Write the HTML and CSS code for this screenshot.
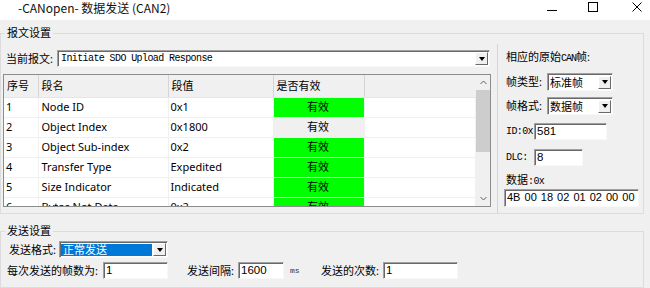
FILE: index.html
```html
<!DOCTYPE html>
<html lang="zh-CN">
<head>
  <meta charset="UTF-8" />
  <title>-CANopen- 数据发送 (CAN2)</title>
  <link rel="stylesheet" href="styles.css">
</head>
<body>
  <div class="titlebar">
    <span class="title">-CANopen- 数据发送 (CAN2)</span>
    <div class="controls">
      <span class="ctl ctl-min"><svg width="10" height="10" viewBox="0 0 10 10"><path d="M0 8.5H10" stroke="#000" stroke-width="1"/></svg></span>
      <span class="ctl ctl-max"><svg width="10" height="10" viewBox="0 0 10 10"><rect x="0.5" y="0.5" width="9" height="9" fill="none" stroke="#000"/></svg></span>
      <span class="ctl ctl-close"><svg width="10" height="10" viewBox="0 0 10 10"><path d="M0.5 0.5L9.5 9.5M9.5 0.5L0.5 9.5" stroke="#000"/></svg></span>
    </div>
  </div>

  <fieldset class="group group-msg">
    <legend>报文设置</legend>
    <div class="msg-body">
      <div class="msg-left">
        <div class="row-current">
          <label class="lbl-current">当前报文:</label>
          <div class="combo combo-msg">
            <span class="combo-text mono">Initiate SDO Upload Response</span>
            <span class="drop"></span>
          </div>
        </div>

        <div class="list">
          <div class="list-view">
            <table class="grid">
              <colgroup>
                <col style="width:34px">
                <col style="width:130px">
                <col style="width:105px">
                <col style="width:91px">
                <col>
              </colgroup>
              <thead>
                <tr>
                  <th>序号</th>
                  <th>段名</th>
                  <th>段值</th>
                  <th>是否有效</th>
                  <th class="blank"></th>
                </tr>
              </thead>
              <tbody>
                <tr><td>1</td><td>Node ID</td><td>0x1</td><td class="valid on">有效</td><td></td></tr>
                <tr><td>2</td><td>Object Index</td><td>0x1800</td><td class="valid off">有效</td><td></td></tr>
                <tr><td>3</td><td>Object Sub-index</td><td>0x2</td><td class="valid on">有效</td><td></td></tr>
                <tr><td>4</td><td>Transfer Type</td><td>Expedited</td><td class="valid on">有效</td><td></td></tr>
                <tr><td>5</td><td>Size Indicator</td><td>Indicated</td><td class="valid on">有效</td><td></td></tr>
                <tr><td>6</td><td>Bytes Not Data</td><td>0x2</td><td class="valid on">有效</td><td></td></tr>
              </tbody>
            </table>
          </div>
          <div class="vscroll">
            <span class="sb-btn"><svg width="7" height="5" viewBox="0 0 7 5"><path d="M0.5 4L3.5 1L6.5 4" fill="none" stroke="#606060"/></svg></span>
            <span class="sb-thumb"></span>
            <span class="sb-track"></span>
            <span class="sb-btn"><svg width="7" height="5" viewBox="0 0 7 5"><path d="M0.5 1L3.5 4L6.5 1" fill="none" stroke="#606060"/></svg></span>
          </div>
        </div>
      </div>

      <div class="msg-right">
        <div class="raw-title">相应的原始<span class="mono">CAN</span>帧:</div>
        <div class="rrow rrow-first">
          <label class="lbl-frame">帧类型:</label>
          <div class="combo combo-frame"><span class="combo-text">标准帧</span><span class="drop"></span></div>
        </div>
        <div class="rrow rrow-gap6">
          <label class="lbl-frame">帧格式:</label>
          <div class="combo combo-frame"><span class="combo-text">数据帧</span><span class="drop"></span></div>
        </div>
        <div class="rrow rrow-id">
          <label class="lbl-id mono">ID:0x</label>
          <div class="field field-id">581</div>
        </div>
        <div class="rrow rrow-dlc">
          <label class="lbl-id mono">DLC:</label>
          <div class="field field-dlc">8</div>
        </div>
        <div class="data-label">数据<span class="mono">:0x</span></div>
        <div class="field field-data">4B 00 18 02 01 02 00 00</div>
      </div>
    </div>
  </fieldset>

  <fieldset class="group group-send">
    <legend>发送设置</legend>
    <div class="send-row send-row-1">
      <label class="lbl-mode">发送格式:</label>
      <div class="combo combo-mode"><span class="combo-text selected">正常发送</span><span class="drop"></span></div>
    </div>
    <div class="send-row send-row-2">
      <label class="lbl-count">每次发送的帧数为:</label>
      <div class="field field-count">1</div>
      <label class="lbl-interval">发送间隔:</label>
      <div class="field field-interval">1600</div>
      <span class="unit mono">ms</span>
      <label class="lbl-times">发送的次数:</label>
      <div class="field field-times">1</div>
    </div>
  </fieldset>
</body>
</html>
```

FILE: styles.css
```css
* {
  box-sizing: border-box;
}
body {
  margin: 0;
  width: 650px;
  height: 288px;
  overflow: hidden;
  background: #f0f0f0;
  color: #000;
  font-family: "Noto Sans", "Noto Sans CJK SC", sans-serif;
  font-size: 11px;
  line-height: 14px;
}
.mono {
  font-family: "Liberation Mono", monospace;
  font-size: 10px;
  letter-spacing: -0.6px;
}

/* title bar */
.titlebar {
  display: flex;
  height: 20px;
  background: #fff;
  overflow: hidden;
}
.title {
  padding-left: 18px;
  font-family: "Noto Sans CJK SC", sans-serif;
  font-size: 12px;
  line-height: 15px;
  color: #111;
}
.controls {
  display: flex;
  margin-left: auto;
  margin-right: -10px;
}
.ctl {
  display: flex;
  justify-content: center;
  align-items: center;
  height: 13px;
}
.ctl-min { width: 40px; }
.ctl-max { width: 42px; }
.ctl-close { width: 46px; }

/* group boxes */
.group {
  margin: 6px 6px 0 0;
  padding: 4px 0 0 2px;
  border: 1px solid #dcdcdc;
  min-inline-size: 0;
}
.group legend {
  margin-left: 2px;
  padding: 0 2px;
  line-height: 14px;
}
.group-send {
  margin-top: 10px;
  padding-top: 3px;
  height: 64px;
}

.msg-body {
  display: flex;
}
.msg-left {
  width: 488px;
  padding: 6px 0 6px 0;
}
.msg-right {
  flex: 1;
  margin-left: 6px;
  border-left: 1px solid #d4d4d4;
  padding-left: 8px;
}

/* combo boxes and edit fields */
.combo, .field {
  height: 17px;
  background: #fff;
  border: 1px solid;
  border-color: #a0a0a0 #f8f8f8 #f8f8f8 #a0a0a0;
  box-shadow: inset 1px 1px 0 #696969;
}
.combo {
  display: flex;
  align-items: center;
  padding: 0 1px 0 2px;
}
.combo-text {
  flex: 1;
  line-height: 13px;
  white-space: nowrap;
}
.drop {
  width: 13px;
  height: 13px;
  display: flex;
  justify-content: center;
  align-items: center;
  background: #f0f0f0;
  border: 1px solid;
  border-color: #fff #696969 #696969 #fff;
}
.drop::after {
  content: "";
  border-top: 4px solid #000;
  border-left: 3px solid transparent;
  border-right: 3px solid transparent;
}
.field {
  padding-left: 2px;
  font-family: "Liberation Sans", sans-serif;
  font-size: 11.5px;
  line-height: 14px;
  white-space: nowrap;
  overflow: hidden;
}

.row-current {
  display: flex;
  align-items: center;
  height: 17px;
  padding-left: 3px;
}
.lbl-current {
  width: 51px;
}
.combo-msg {
  flex: 1;
  margin-right: 1px;
}
.combo-msg .combo-text {
  padding-left: 1px;
}

/* list view */
.list {
  display: flex;
  margin-top: 7px;
  height: 133px;
  border: 1px solid #8c8c8c;
  background: #fff;
}
.list-view {
  flex: 1;
  overflow: hidden;
}
.grid {
  width: 472px;
  table-layout: fixed;
  border-collapse: collapse;
}
.grid th {
  height: 22px;
  padding: 0 3px;
  text-align: left;
  font-weight: normal;
  background: #f0f0f0;
  border-right: 1px solid #d5d5d5;
  border-bottom: 1px solid #e5e5e5;
}
.grid th.blank {
  border-right: none;
}
.grid td {
  height: 20px;
  padding: 0 3px 0 2px;
  white-space: nowrap;
  overflow: hidden;
  border-right: 1px solid #f0f0f0;
  border-bottom: 1px solid #f0f0f0;
}
.grid td:first-child {
  padding-left: 2px;
}
.grid td:nth-child(2) {
  padding-left: 3px;
}
.grid td.valid {
  text-align: center;
}
.valid.on {
  background: #00ff00;
}
.valid.off {
  background: #f0f0f0;
}

.vscroll {
  width: 14px;
  display: flex;
  flex-direction: column;
  background: #f0f0f0;
}
.sb-btn {
  height: 15px;
  display: flex;
  justify-content: center;
  align-items: center;
}
.sb-thumb {
  height: 62px;
  background: #cdcdcd;
}
.sb-track {
  flex: 1;
}

/* raw CAN frame panel */
.raw-title {
  margin-top: 6px;
  white-space: nowrap;
}
.raw-title .mono {
  font-size: 10px;
  letter-spacing: -1px;
}
.rrow {
  display: flex;
  align-items: center;
}
.rrow-first { margin-top: 7px; }
.rrow-gap6 { margin-top: 6px; }
.rrow-id { margin-top: 8px; }
.rrow-dlc { margin-top: 9px; }
.lbl-frame {
  width: 41px;
}
.combo-frame {
  width: 66px;
  height: 18px;
}
.lbl-id {
  width: 28px;
}
.field-id { width: 73px; }
.field-dlc { width: 49px; }
.data-label {
  margin-top: 7px;
}
.field-data {
  width: 135px;
  height: 18px;
  margin-left: -2px;
  line-height: 15px;
  font-size: 11px;
  word-spacing: 1px;
}

/* send settings */
.send-row {
  display: flex;
  align-items: center;
  height: 17px;
}
.send-row-1 {
  padding-left: 6px;
}
.send-row-2 {
  margin-top: 4px;
  padding-left: 4px;
}
.lbl-mode { width: 50px; }
.combo-mode {
  width: 109px;
  padding-left: 1px;
}
.combo-text.selected {
  margin: 1px 1px 1px 0;
  padding-left: 2px;
  background: #0078d7;
  color: #fff;
  line-height: 12px;
}
.lbl-count { width: 96px; }
.field-count { width: 65px; }
.lbl-interval {
  width: 51px;
  margin-left: 19px;
}
.field-interval { width: 46px; }
.unit {
  width: 37px;
  padding-left: 6px;
  font-size: 8px;
  letter-spacing: 0;
  color: #333;
}
.lbl-times { width: 62px; }
.field-times { width: 75px; }
```
